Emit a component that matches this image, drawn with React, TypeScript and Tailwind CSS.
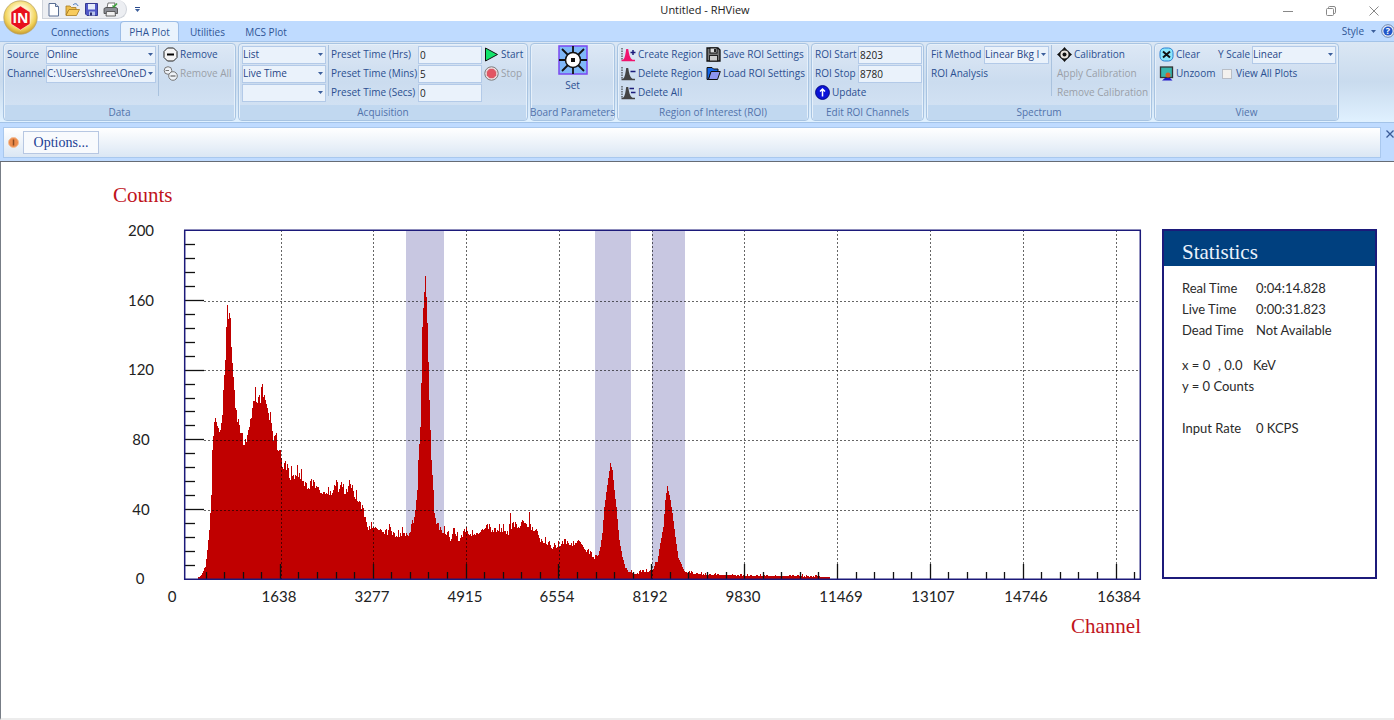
import type { ReactNode } from "react";
import clsx from "clsx";

// [x, y] outline of the spectrum, relative to the top left corner of the plot
const OUTLINE: [number, number][] = [
    [14, 349], [16, 347], [21, 337], [23, 320], [25, 300], [27, 265], [28, 220], [30, 192], [31, 188], [33, 196],
    [36, 200], [38, 185], [39, 160], [41, 130], [42, 97], [43, 75], [44, 85], [46, 88], [47, 117], [48, 133],
    [50, 160], [51, 188], [54, 195], [57, 203], [58, 213], [62, 212], [64, 197], [67, 188], [69, 168], [74, 170],
    [76, 173], [77, 157], [78, 165], [81, 170], [83, 178], [85, 187], [87, 193], [89, 208], [92, 203], [93, 218],
    [96, 220], [98, 236], [101, 238], [105, 247], [106, 250], [107, 236], [108, 250], [113, 244], [117, 248], [120, 255],
    [124, 258], [133, 255], [136, 261], [147, 263], [151, 256], [154, 262], [157, 252], [159, 262], [163, 262], [165, 250],
    [168, 262], [171, 267], [174, 270], [178, 282], [181, 289], [184, 298], [189, 296], [196, 299], [203, 305], [205, 294],
    [208, 304], [213, 307], [219, 303], [223, 307], [226, 301], [229, 293], [231, 280], [233, 260], [234, 230], [236, 197],
    [237, 153], [238, 97], [239, 78], [241, 46], [242, 67], [243, 93], [245, 170], [247, 230], [249, 260], [250, 283],
    [253, 299], [263, 304], [266, 310], [270, 300], [274, 310], [279, 307], [282, 299], [286, 305], [293, 303], [301, 297],
    [306, 301], [319, 300], [324, 305], [326, 283], [327, 298], [336, 296], [338, 288], [344, 297], [345, 282], [346, 298],
    [353, 301], [356, 312], [361, 312], [369, 318], [376, 315], [383, 313], [389, 315], [395, 309], [399, 317], [404, 323],
    [410, 328], [414, 325], [416, 317], [418, 303], [420, 277], [423, 255], [424, 248], [426, 233], [428, 240], [430, 260],
    [432, 277], [434, 300], [435, 310], [438, 327], [441, 337], [444, 341], [453, 344], [459, 341], [466, 342], [469, 338],
    [473, 332], [476, 313], [479, 297], [481, 270], [483, 256], [486, 270], [488, 283], [491, 307], [494, 328], [497, 333],
    [500, 341], [504, 343], [513, 344], [523, 345], [551, 345], [558, 346], [616, 346], [646, 347],
];

const BASE = 349;
const X_TICKS = Array.from({ length: 51 }, (_, i) => Math.round(4 + (i + 1) * 18.57));
const X_GRID = [97, 189, 282, 375, 468, 560, 653, 746, 839, 932];
const Y_GRID = [71, 140, 210, 280];
const Y_TICKS = Array.from({ length: 24 }, (_, i) => Math.round((i + 1) * 13.96));
const X_LABELS: [number, string][] = [
    [-12, "0"], [95, "1638"], [188, "3277"], [281, "4915"], [373, "6554"], [466, "8192"],
    [559, "9830"], [657, "11469"], [749, "13107"], [842, "14746"], [935, "16384"],
];
const Y_LABELS: [number, string][] = [[1, "200"], [71, "160"], [140, "120"], [210, "80"], [280, "40"], [349, "0"]];
const REGIONS = [[222, 38], [411, 36], [468, 33]];

function spectrumPath() {
    let d = `M14 ${BASE}`;
    let seg = 0;
    for (let x = 14; x <= 645; x++) {
        while (seg < OUTLINE.length - 2 && OUTLINE[seg + 1][0] <= x) seg++;
        const [x0, y0] = OUTLINE[seg];
        const [x1, y1] = OUTLINE[seg + 1];
        const y = y0 + ((y1 - y0) * (x - x0)) / (x1 - x0);
        const steep = Math.abs(y1 - y0) > 3 * (x1 - x0);
        const r = ((x * 7919 + 104729 + x * x * 31) % 101) / 101;
        const amp = steep ? 0 : Math.sqrt(Math.max(BASE - y, 0)) * 1.2;
        const top = Math.min(BASE - 2, Math.round(y - (r * r * r - 0.2) * amp));
        d += `V${top}H${x + 1}`;
    }
    return `${d}V${BASE}Z`;
}

function Spectrum() {
    return (
        <svg viewBox="-72 -50 1030 460" className="block w-full" role="img" aria-label="PHA plot">
            {REGIONS.map(([x, w]) => (
                <rect key={x} x={x} y="1" width={w} height="348" fill="#c8c7e1" />
            ))}
            <path d={spectrumPath()} fill="#c00000" shapeRendering="crispEdges" />
            <g stroke="#000" strokeOpacity="0.6" strokeDasharray="2 2" shapeRendering="crispEdges">
                {X_GRID.map((x) => (
                    <line key={x} x1={x} x2={x} y1="0" y2="349" />
                ))}
                {Y_GRID.map((y) => (
                    <line key={y} x1="20" x2="956" y1={y} y2={y} />
                ))}
            </g>
            <g stroke="#111" strokeWidth="1.3">
                {X_TICKS.map((x, i) => (
                    <line key={x} x1={x - 0.5} x2={x - 0.5} y1={i % 5 === 4 ? 334 : 342} y2="349" />
                ))}
                {Y_TICKS.map((y, i) => (
                    <line key={y} x1="1" x2={i % 5 === 4 ? 20 : 11} y1={y + 0.5} y2={y + 0.5} />
                ))}
            </g>
            <path d="M0.700 0.300H956.300V349.300H0.700Z" fill="none" stroke="#1c1a7a" strokeWidth="1.500" />
            <g className="fill-[#222] font-[Lato,sans-serif] text-[15px]" textAnchor="middle">
                {X_LABELS.map(([x, t]) => (
                    <text key={t} x={x} y="372">{t}</text>
                ))}
                {Y_LABELS.map(([y, t]) => (
                    <text key={t} x={t === "0" ? -44 : -43} y={y + 5}>{t}</text>
                ))}
            </g>
            <g className="fill-[#c0141c] font-['Liberation_Serif',serif] text-[21px]">
                <text x="-71" y="-28">Counts</text>
                <text x="957" y="403" textAnchor="end">Channel</text>
            </g>
        </svg>
    );
}

function Caret({ className }: { className?: string }) {
    return (
        <svg viewBox="0 0 5 3" className={clsx("h-[3px] w-[5px]", className)}>
            <path d="M0 0H5L2.5 3Z" fill="#3c5f9c" />
        </svg>
    );
}

function Combo({ id, label, value, className }: { id?: string; label?: string; value: string; className: string }) {
    return (
        <div className={clsx("relative h-[18px]", className)}>
            <select
                id={id}
                aria-label={label}
                defaultValue={value}
                className="block h-full w-full appearance-none border border-[#b3cae8] bg-[#eaf2fb] pr-2 text-[10px] text-[#1f4586]"
            >
                <option>{value}</option>
            </select>
            <Caret className="pointer-events-none absolute top-[7px] right-[3px]" />
        </div>
    );
}

function Field({ id, value }: { id: string; value: string }) {
    return (
        <input
            id={id}
            defaultValue={value}
            className="block h-[18px] w-[64px] border border-[#b3cae8] bg-[#eaf2fb] px-px text-[10px] text-[#222]"
        />
    );
}

function Row({ children, className }: { children?: ReactNode; className?: string }) {
    return <div className={clsx("flex h-[19px] items-center whitespace-nowrap", className)}>{children}</div>;
}

function Tool({ icon, children, disabled }: { icon?: ReactNode; children: ReactNode; disabled?: boolean }) {
    return (
        <Row>
            <button disabled={disabled} className="flex items-center gap-0.5 disabled:text-[#9a9fa8]">
                {icon}
                {children}
            </button>
        </Row>
    );
}

function Separator() {
    return <div className="mx-[2px] h-[51px] w-px shrink-0 bg-[#a9c2de]" />;
}

function Group({ title, className, children }: { title: string; className: string; children: ReactNode }) {
    return (
        <section
            className={clsx(
                "flex shrink-0 flex-col rounded-sm border border-[#a8c4e2] bg-linear-to-b from-[#dde8f5] via-[#cbdcef] to-[#d5e4f5] shadow-[inset_0_0_0_1px_#e6f0fa]",
                className,
            )}
        >
            <div className="flex h-[61px] shrink-0 pt-px">{children}</div>
            <h2 className="mx-px flex h-[15px] shrink-0 items-center justify-center bg-[#c1d8f0] whitespace-nowrap text-[#5273ab]">
                {title}
            </h2>
        </section>
    );
}

const ICON = "size-[15px] shrink-0";

function RemoveIcon() {
    return (
        <svg viewBox="0 0 15 15" className={ICON}>
            <path d="M4.5 1H10.5L14 4.5V10.5L10.5 14H4.5L1 10.5V4.5Z" fill="#f4f4f4" stroke="#222" strokeLinejoin="round" />
            <path d="M4 7.5H11" stroke="#000" strokeWidth="2" />
        </svg>
    );
}

function RemoveAllIcon() {
    return (
        <svg viewBox="0 0 15 15" className={ICON} fill="#eef2f7" stroke="#777">
            <circle cx="5" cy="4.500" r="3.800" />
            <path d="M2.500 4.500H6" />
            <circle cx="10" cy="10" r="4.300" />
            <path d="M7.500 10H12.500" stroke="#444" />
        </svg>
    );
}

function StartIcon() {
    return (
        <svg viewBox="0 0 15 15" className={ICON}>
            <path d="M1.500 1L13.500 7.500L1.500 14Z" fill="#12e36b" stroke="#111" />
        </svg>
    );
}

function StopIcon() {
    return (
        <svg viewBox="0 0 15 15" className={ICON}>
            <circle cx="7.500" cy="7.500" r="6.700" fill="#f3e5e8" stroke="#777" />
            <path d="M5.500 3H9.500L12 5.500V9.500L9.500 12H5.500L3 9.500V5.500Z" fill="#e25563" stroke="#c2606b" strokeWidth="0.5" />
        </svg>
    );
}

function BoardIcon() {
    return (
        <svg viewBox="0 0 30 30" className="size-[30px]">
            <rect x="1" y="1" width="28" height="28" fill="#7fb8f8" stroke="#7a48f0" strokeWidth="1.500" />
            <path d="M15 1V29M1 15H29M4 4L26 26M26 4L4 26" stroke="#111" strokeWidth="1.800" />
            <circle cx="15" cy="15" r="7.500" fill="#fff" stroke="#111" strokeWidth="1.500" />
            <rect x="13" y="13" width="4" height="4" fill="#111" />
        </svg>
    );
}

function PeakIcon({ color, mark }: { color: string; mark: string }) {
    return (
        <svg viewBox="0 0 15 15" className={ICON}>
            <path d="M1 1V13" stroke="#222" strokeDasharray="1.500 1" />
            <path d="M0.500 13.500H14" stroke={color} strokeWidth="1.500" />
            <path d="M2 13C4 11 4.500 7 5.200 2H7.200C8 7 8.800 11 11.500 13Z" fill={color} />
            <path d={mark} stroke="#1b1b7a" strokeWidth="1.500" />
        </svg>
    );
}

function SaveIcon() {
    return (
        <svg viewBox="0 0 15 15" className={ICON}>
            <path d="M1 1H12L14 3V14H1Z" fill="#777" stroke="#111" strokeWidth="1.300" />
            <rect x="4" y="1" width="7" height="5" fill="#ddd" stroke="#111" />
            <rect x="8" y="2" width="2" height="3" fill="#222" />
            <rect x="3.500" y="8.500" width="8" height="5.500" fill="#ccc" stroke="#222" />
        </svg>
    );
}

function LoadIcon() {
    return (
        <svg viewBox="0 0 15 15" className={ICON} stroke="#111" strokeLinejoin="round">
            <path d="M1 1.500H6L7.500 3H12V6H5L2.500 13.500H1Z" fill="#1266e8" />
            <path d="M5 5.500H14.300L11.500 13.500H2.500Z" fill="#8d96f0" />
        </svg>
    );
}

function UpdateIcon() {
    return (
        <svg viewBox="0 0 15 15" className={ICON}>
            <circle cx="7.500" cy="7.500" r="6.900" fill="#0a14d8" stroke="#060a80" />
            <path d="M7.500 11.500V4.500M5 6.500L7.500 4L10 6.500" fill="none" stroke="#fff" strokeWidth="1.500" />
        </svg>
    );
}

function TargetIcon() {
    return (
        <svg viewBox="0 0 15 15" className={ICON}>
            <path d="M7.500 0L10 3H5ZM7.500 15L5 12H10ZM0 7.500L3 5V10ZM15 7.500L12 10V5Z" fill="#111" />
            <circle cx="7.500" cy="7.500" r="4.700" fill="#e8e3dc" stroke="#111" strokeWidth="1.300" />
            <circle cx="7.500" cy="7.500" r="2" fill="#111" />
        </svg>
    );
}

function ClearIcon() {
    return (
        <svg viewBox="0 0 15 15" className={ICON}>
            <rect x="1" y="1" width="13" height="13" rx="4.500" fill="#8be6fb" stroke="#2b7fd0" />
            <path d="M4 4.500L11 10.500M11 4.500L4 10.500" stroke="#111" strokeWidth="2" />
        </svg>
    );
}

function UnzoomIcon() {
    return (
        <svg viewBox="0 0 15 15" className={ICON}>
            <rect x="1.500" y="1" width="12" height="10.500" fill="#36b5ad" stroke="#333" strokeWidth="1.300" />
            <path d="M3 14.500L6 12H11L13.500 14.500Z" fill="#2016c8" />
            <circle cx="9" cy="9" r="2.500" fill="#d4602a" />
        </svg>
    );
}

function QuickAccess() {
    return (
        <div className="flex h-[19px] items-center gap-1 rounded-r-full border border-t-0 border-[#cfd3da] bg-[#eceef2] pr-2 pl-[3px]">
            <button aria-label="New">
                <svg viewBox="0 0 15 15" className={ICON}>
                    <path d="M3 1.500H9.500L12.500 4.500V14H3Z" fill="#fff" stroke="#5a6f94" />
                    <path d="M9.500 1.500V4.500H12.500" fill="#cdd8ea" stroke="#5a6f94" />
                </svg>
            </button>
            <button aria-label="Open">
                <svg viewBox="0 0 15 15" className={ICON}>
                    <path d="M1 13V4H5L6.500 5.500H11V8H4Z" fill="#eebf4e" stroke="#a87b1e" strokeWidth="0.8" />
                    <path d="M1 13.500L4 7.500H14.500L11.500 13.500Z" fill="#f8cb5c" stroke="#a87b1e" strokeWidth="0.8" />
                    <path d="M8 3C10 1 12 1.500 13 4" fill="none" stroke="#3b6fb8" />
                </svg>
            </button>
            <button aria-label="Save">
                <svg viewBox="0 0 15 15" className={ICON}>
                    <path d="M1.500 1.500H13.500V13.500H3L1.500 12Z" fill="#5058c8" stroke="#353a90" />
                    <rect x="4" y="2" width="7" height="5.500" fill="#e4ebfa" />
                    <rect x="5" y="9.500" width="6" height="4" fill="#b8c4ea" />
                    <rect x="6" y="10.500" width="2" height="3" fill="#2b2f70" />
                </svg>
            </button>
            <button aria-label="Print">
                <svg viewBox="0 0 15 15" className={ICON}>
                    <path d="M4 6L5 1H12L11 6Z" fill="#fff" stroke="#555" strokeWidth="0.8" />
                    <path d="M1 6.500L3 5.500H13L14.500 6.500V11.500H1Z" fill="#8a8d94" stroke="#444" strokeWidth="0.8" />
                    <path d="M3.500 9.500H12L12.500 14H3Z" fill="#f0f0f0" stroke="#444" strokeWidth="0.8" />
                    <path d="M9.500 3.500L11 5L14 1.500" fill="none" stroke="#3ba53a" strokeWidth="1.500" />
                </svg>
            </button>
        </div>
    );
}

function AppButton() {
    return (
        <button aria-label="Application menu" className="absolute top-0 left-[3px] z-10 size-[35px]">
            <svg viewBox="0 0 35 35" className="size-full">
                <defs>
                    <radialGradient id="gold" cx="0.5" cy="0.4" r="0.6">
                        <stop offset="0.4" stopColor="#fff6c8" />
                        <stop offset="0.75" stopColor="#f2d45c" />
                        <stop offset="1" stopColor="#c89a2c" />
                    </radialGradient>
                </defs>
                <circle cx="17.500" cy="17.500" r="16.700" fill="url(#gold)" stroke="#b9a46a" strokeWidth="0.8" />
                <path d="M17.500 6L27 12V24L17.500 30L8 24V12Z" fill="#e8101c" stroke="#fff3e0" strokeWidth="0.6" />
                <text x="17.500" y="23" textAnchor="middle" fill="#fff" className="font-['Open_Sans',sans-serif] text-[14px] font-bold">
                    IN
                </text>
            </svg>
        </button>
    );
}

function TitleBar() {
    return (
        <header className="relative grid h-[21px] grid-cols-[1fr_auto_1fr] bg-white">
            <AppButton />
            <div className="flex items-center gap-2 self-start pl-[42px]">
                <QuickAccess />
                <button aria-label="Customize toolbar" className="flex flex-col items-center gap-px">
                    <span className="h-px w-[5px] bg-[#2a4a8c]" />
                    <Caret />
                </button>
            </div>
            <h1 className="pl-4 text-[11px] leading-5 text-[#222]">Untitled - RHView</h1>
            <div className="flex items-center justify-end gap-[33px] pr-[15px] text-[#888]">
                <button aria-label="Minimize">
                    <svg viewBox="0 0 10 10" className="size-[10px]"><path d="M0 5.500H10" stroke="currentColor" /></svg>
                </button>
                <button aria-label="Restore">
                    <svg viewBox="0 0 10 10" className="size-[10px]" fill="none" stroke="currentColor">
                        <rect x="0.500" y="2.500" width="7" height="7" rx="1" />
                        <path d="M2.500 2.500V1.500Q2.500 0.500 3.500 0.500H8Q9.500 0.500 9.500 2V6.500Q9.500 7.500 8 7.500" />
                    </svg>
                </button>
                <button aria-label="Close">
                    <svg viewBox="0 0 10 10" className="size-[10px]"><path d="M0.500 0.500L9.500 9.500M9.500 0.500L0.500 9.500" stroke="currentColor" /></svg>
                </button>
            </div>
        </header>
    );
}

function TabStrip() {
    return (
        <nav className="flex h-5 bg-[#bfdbff] pl-[40px] text-[10px] text-[#2f5596]">
            <button className="w-[80px] pt-0.5">Connections</button>
            <button className="w-[59px] rounded-t-sm border border-b-0 border-[#9dbde6] bg-[#eaf3fd] pt-px">PHA Plot</button>
            <button className="w-[57px] pt-0.5">Utilities</button>
            <button className="w-[60px] pt-0.5">MCS Plot</button>
            <div className="ml-auto flex items-center">
                <button className="flex items-center gap-[7px]">
                    Style
                    <Caret />
                </button>
                <button aria-label="Help" className="ml-[5px] -mr-px">
                    <svg viewBox="0 0 14 14" className="size-[14px]">
                        <circle cx="7" cy="7" r="6.300" fill="#e8eef8" stroke="#6b84ac" />
                        <circle cx="7" cy="7" r="4.600" fill="#2356c8" />
                        <text x="7" y="10" textAnchor="middle" fill="#fff" className="text-[9px] font-bold">?</text>
                    </svg>
                </button>
            </div>
        </nav>
    );
}

function Ribbon() {
    return (
        <div className="flex h-[82px] gap-[2px] overflow-hidden border-y border-[#a3c3e8] bg-linear-to-b from-[#dbe7f4] via-[#c9dbee] to-[#e0f1ff] py-px pl-[3px] text-[10px] text-[#2b4f90]">
            <Group title="Data" className="w-[233px]">
                <div className="w-[42px] pl-[3px]">
                    <Row><label htmlFor="source">Source</label></Row>
                    <Row><label htmlFor="channel">Channel</label></Row>
                </div>
                <div>
                    <Row><Combo id="source" value="Online" className="w-[110px]" /></Row>
                    <Row><Combo id="channel" value="C:\Users\shree\OneD" className="w-[110px]" /></Row>
                </div>
                <Separator />
                <div className="pl-[2px]">
                    <Tool icon={<RemoveIcon />}>Remove</Tool>
                    <Tool icon={<RemoveAllIcon />} disabled>Remove All</Tool>
                </div>
            </Group>
            <Group title="Acquisition" className="w-[290px]">
                <div className="pl-[3px]">
                    <Row><Combo label="Mode" value="List" className="w-[84px]" /></Row>
                    <Row><Combo label="Preset type" value="Live Time" className="w-[84px]" /></Row>
                    <Row><Combo label="Preset option" value="" className="w-[84px]" /></Row>
                </div>
                <Separator />
                <div className="w-[87px]">
                    <Row><label htmlFor="hrs">Preset Time (Hrs)</label></Row>
                    <Row><label htmlFor="mins">Preset Time (Mins)</label></Row>
                    <Row><label htmlFor="secs">Preset Time (Secs)</label></Row>
                </div>
                <div className="pr-[2px]">
                    <Row><Field id="hrs" value="0" /></Row>
                    <Row><Field id="mins" value="5" /></Row>
                    <Row><Field id="secs" value="0" /></Row>
                </div>
                <div>
                    <Tool icon={<StartIcon />}>Start</Tool>
                    <Tool icon={<StopIcon />} disabled>Stop</Tool>
                </div>
            </Group>
            <Group title="Board Parameters" className="w-[85px]">
                <button className="mx-auto flex flex-col items-center gap-[3px] self-start">
                    <BoardIcon />
                    Set
                </button>
            </Group>
            <Group title="Region of Interest (ROI)" className="w-[192px]">
                <div className="w-[88px] pl-[3px]">
                    <Tool icon={<PeakIcon color="#f0146e" mark="M9.500 5.500H14.500M12 3V8" />}>Create Region</Tool>
                    <Tool icon={<PeakIcon color="#444" mark="M9.500 5.500H14.500" />}>Delete Region</Tool>
                    <Tool icon={<PeakIcon color="#444" mark="M8.500 3.500H13M10 7.500H14.500" />}>Delete All</Tool>
                </div>
                <div>
                    <Tool icon={<SaveIcon />}>Save ROI Settings</Tool>
                    <Tool icon={<LoadIcon />}>Load ROI Settings</Tool>
                </div>
            </Group>
            <Group title="Edit ROI Channels" className="w-[113px]">
                <div className="pl-[3px]">
                    <Row>
                        <label htmlFor="roi-start" className="w-[43px]">ROI Start</label>
                        <Field id="roi-start" value="8203" />
                    </Row>
                    <Row>
                        <label htmlFor="roi-stop" className="w-[43px]">ROI Stop</label>
                        <Field id="roi-stop" value="8780" />
                    </Row>
                    <Tool icon={<UpdateIcon />}>Update</Tool>
                </div>
            </Group>
            <Group title="Spectrum" className="w-[226px]">
                <div className="pl-1">
                    <Row>
                        <label htmlFor="fit" className="w-[53px]">Fit Method</label>
                        <Combo id="fit" value="Linear Bkg I" className="w-[65px]" />
                    </Row>
                    <Tool>ROI Analysis</Tool>
                </div>
                <Separator />
                <div className="pl-[3px]">
                    <Tool icon={<TargetIcon />}>Calibration</Tool>
                    <Tool disabled>Apply Calibration</Tool>
                    <Tool disabled>Remove Calibration</Tool>
                </div>
            </Group>
            <Group title="View" className="w-[185px]">
                <div className="w-[63px] pl-1">
                    <Tool icon={<ClearIcon />}>Clear</Tool>
                    <Tool icon={<UnzoomIcon />}>Unzoom</Tool>
                </div>
                <div>
                    <Row>
                        <label htmlFor="scale" className="w-[34px]">Y Scale</label>
                        <Combo id="scale" value="Linear" className="w-[84px]" />
                    </Row>
                    <Row>
                        <input id="all-plots" type="checkbox" className="mx-1 size-[10px] appearance-none border border-[#b9bec6] bg-[#f3f1ee]" />
                        <label htmlFor="all-plots">View All Plots</label>
                    </Row>
                </div>
            </Group>
        </div>
    );
}

function OptionsBar() {
    return (
        <div className="flex h-[39px] items-start border-b border-[#666c75] bg-[#bfdbff] pt-1 pl-[3px]">
            <div className="flex h-[31px] flex-1 items-center gap-1 border border-[#a9c8ee] bg-linear-to-b from-white to-[#dbe7f4] pl-1">
                <svg viewBox="0 0 11 11" className="size-[11px]">
                    <circle cx="5.500" cy="5.500" r="5" fill="#ec8b4c" stroke="#f3bf98" />
                    <path d="M5.500 2.500V8.500" stroke="#8a4a20" strokeWidth="1.500" />
                </svg>
                <button className="h-[23px] w-[76px] border border-[#b7c7e2] bg-[#f8fafd] font-['Liberation_Serif',serif] text-[14px] leading-5 text-[#1c3f94]">
                    Options...
                </button>
            </div>
            <button aria-label="Close bar" className="ml-[5px] pt-[3px]">
                <svg viewBox="0 0 8 8" className="size-2"><path d="M0.500 0.500L7.500 7.500M7.500 0.500L0.500 7.500" stroke="#3a5a96" strokeWidth="1.300" /></svg>
            </button>
        </div>
    );
}

const TIMES = [
    ["Real Time", "0:04:14.828"],
    ["Live Time", "0:00:31.823"],
    ["Dead Time", "Not Available"],
];

function Statistics() {
    return (
        <aside className="mt-[49px] h-[350px] w-[215px] shrink-0 border-2 border-[#1c1a7a] font-[Lato,sans-serif] text-[13px] leading-[21px] text-[#2a2a2a]">
            <h2 className="h-[35px] bg-[#00407f] pl-[18px] font-['Liberation_Serif',serif] text-[21px] leading-[42px] text-[#eaf2fb]">
                Statistics
            </h2>
            <dl className="grid grid-cols-[74px_1fr] pt-3 pl-[18px]">
                {TIMES.map(([name, value]) => (
                    <div key={name} className="contents">
                        <dt>{name}</dt>
                        <dd>{value}</dd>
                    </div>
                ))}
            </dl>
            <div className="pt-[14px] pl-[18px]">
                <p className="flex">
                    <span className="w-9">x = 0</span>
                    <span className="w-[35px]">, 0.0</span>
                    <span>KeV</span>
                </p>
                <p>y = 0 Counts</p>
            </div>
            <dl className="grid grid-cols-[74px_1fr] pt-[21px] pl-[18px]">
                <dt>Input Rate</dt>
                <dd>0 KCPS</dd>
            </dl>
        </aside>
    );
}

export default function App() {
    return (
        <div className="flex min-h-screen flex-col bg-white font-['Open_Sans',sans-serif]">
            <TitleBar />
            <TabStrip />
            <Ribbon />
            <OptionsBar />
            <main className="flex flex-1 gap-5 border-b-2 border-l border-b-[#ececec] border-l-[#777d86] pt-[18px] pr-[17px] pl-[111px]">
                <div className="min-w-0 flex-1">
                    <Spectrum />
                </div>
                <Statistics />
            </main>
        </div>
    );
}
